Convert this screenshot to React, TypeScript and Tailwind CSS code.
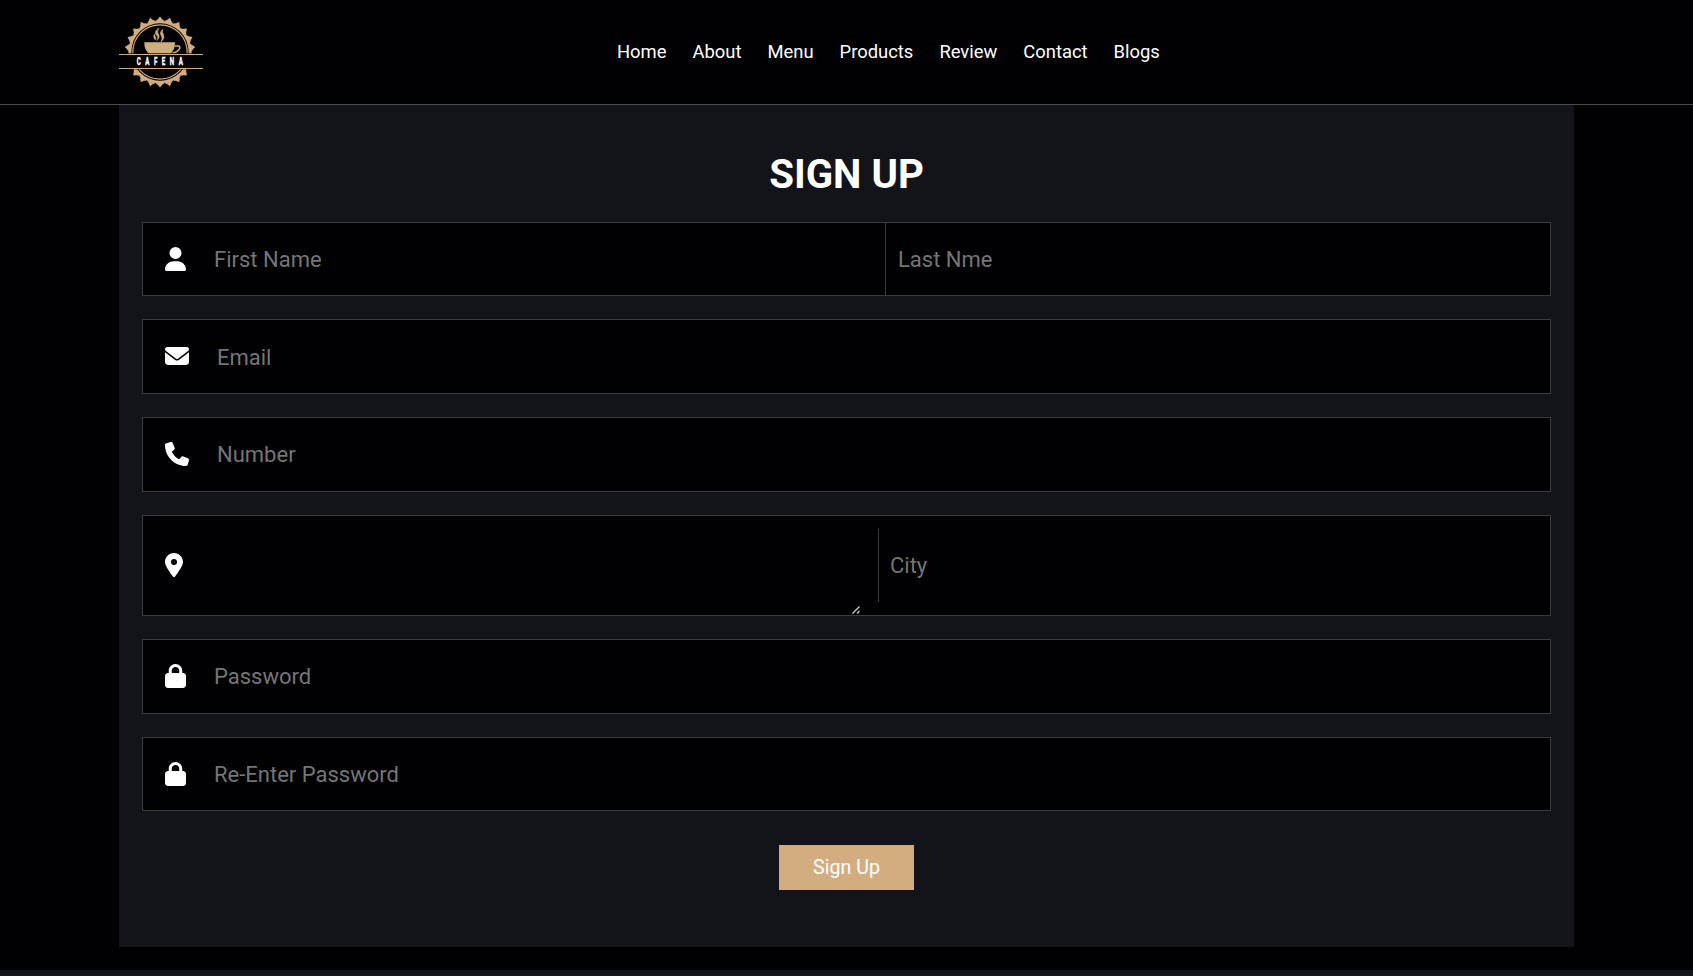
import type { ReactNode } from "react";
import {
  FaEnvelope,
  FaLocationDot,
  FaLock,
  FaPhone,
  FaUser,
} from "react-icons/fa6";

const links = ["Home", "About", "Menu", "Products", "Review", "Contact", "Blogs"];

const TEETH = 22;

function badgePath(cx: number, cy: number, inner: number, outer: number) {
  const step = (Math.PI * 2) / TEETH;
  let d = "";
  for (let i = 0; i < TEETH; i++) {
    const tip = -Math.PI / 2 + i * step;
    const at = (r: number, a: number) =>
      `${(cx + r * Math.cos(a)).toFixed(1)} ${(cy + r * Math.sin(a)).toFixed(1)}`;
    d += `${i === 0 ? "M" : "L"}${at(inner, tip - step / 2)}`;
    d += `Q${at(inner + 4, tip - step * 0.2)} ${at(outer, tip)}`;
    d += `Q${at(inner + 4, tip + step * 0.2)} ${at(inner, tip + step / 2)}`;
  }
  return d + "Z";
}

function Logo() {
  return (
    <svg viewBox="27 15 252 234" className="h-[78px] w-[84px] shrink-0">
      <path d={badgePath(150, 132, 93, 106)} fill="#d3ad7f" stroke="#d3ad7f" strokeWidth="1.5" />
      <circle cx="150" cy="132" r="86" fill="#010103" />
      <circle cx="150" cy="132" r="81.500" fill="none" stroke="#d3ad7f" strokeWidth="3.5" />
      <path d="M103 103h92q1 23-15 35h-62q-16-12-15-35Z" fill="#d3ad7f" />
      <path d="M194 114h10q8 0 4 9-5 10-21 12" fill="none" stroke="#d3ad7f" strokeWidth="5" />
      <g fill="#d3ad7f" stroke="#d3ad7f" strokeWidth="1.5">
        <path d="M147 60q-16 10-8 20 8 8 1 18 12-10 5-21-5-7 2-17Z" />
        <path d="M158 64q-11 10-5 18 6 8 0 20 12-10 8-21-6-8-3-17Z" />
        <path d="M137 75q-5 6-1 11 3 5 0 10-6-6-5-11 1-6 6-10Z" />
      </g>
      <rect x="27" y="136" width="252" height="48" fill="#010103" />
      <path d="M27 139.500H279M27 181.500H279" stroke="#d3ad7f" strokeWidth="3.5" />
      <text
        transform="translate(80 171.500) scale(.62 1)"
        fill="#fff"
        stroke="#fff"
        strokeWidth="1"
        className="font-['Roboto'] text-[30px] font-bold"
        textLength="224"
        lengthAdjust="spacing"
      >
        CAFENA
      </text>
    </svg>
  );
}

function Row({ icon, children, className }: { icon: ReactNode; children: ReactNode; className: string }) {
  return (
    <div className={`flex items-center border border-[#3b3b3d] bg-[#010103] pl-[22px] text-[24px] text-white ${className}`}>
      <span className="shrink-0 pb-px">{icon}</span>
      {children}
    </div>
  );
}

const field =
  "min-w-0 bg-transparent text-[22px] text-white outline-none placeholder:text-[#757575]";

export default function App() {
  return (
    <div className="flex h-[976px] flex-col overflow-hidden bg-[#010103] font-['Roboto',sans-serif] text-white">
      <header className="flex h-[105px] shrink-0 items-center border-b border-[#4d4d4f] pl-[119px]">
        <Logo />
        <nav className="ml-[414px] flex gap-[26px] text-[18.4px] leading-6">
          {links.map((l) => (
            <a key={l} href="#">
              {l}
            </a>
          ))}
        </nav>
      </header>

      <main className="mx-[119px] flex h-[842px] shrink-0 flex-col items-center bg-[#131419] px-[23px] pt-[45px]">
        <h1 className="text-[40.200px] leading-[50px] font-bold">SIGN UP</h1>
        <form className="mt-[22px] flex w-full flex-col">
          <Row icon={<FaUser className="w-[21px]" />} className="mb-[23px] h-[74px]">
            <input className={`${field} ml-[28px] h-full w-[672px] border-r border-[#3b3b3d] pt-px`} placeholder="First Name" />
            <input className={`${field} h-full flex-1 pt-px pl-[12px]`} placeholder="Last Nme" />
          </Row>
          <Row icon={<FaEnvelope className="w-[24px]" />} className="mb-[23px] h-[75px]">
            <input className={`${field} ml-[28px] h-full flex-1 pt-px`} placeholder="Email" />
          </Row>
          <Row icon={<FaPhone className="w-[24px]" />} className="mb-[23px] h-[75px]">
            <input className={`${field} ml-[28px] h-full flex-1`} placeholder="Number" />
          </Row>
          <Row icon={<FaLocationDot className="w-[18px]" />} className="mb-[23px] h-[101px]">
            <div className="flex h-full w-[677px] items-end">
              <textarea className={`${field} h-full flex-1 resize-none`} />
              <svg viewBox="0 0 8 8" className="mb-px h-[8px] w-[8px]" fill="none" stroke="#c8c8c8" strokeWidth="1.4">
                <path d="M.5 7.500 7.500.5M5 7.500l2.500-2.500" />
              </svg>
            </div>
            <input className={`${field} ml-[18px] h-[73px] flex-1 border-l border-[#3b3b3d] pl-[11px]`} placeholder="City" />
          </Row>
          <Row icon={<FaLock className="w-[21px]" />} className="mb-[23px] h-[75px]">
            <input className={`${field} ml-[28px] h-full flex-1`} placeholder="Password" />
          </Row>
          <Row icon={<FaLock className="w-[21px]" />} className="h-[74px]">
            <input className={`${field} ml-[28px] h-full flex-1 pt-px`} placeholder="Re-Enter Password" />
          </Row>
          <button type="button" className="mt-[34px] h-[45px] w-[135px] self-center bg-[#d3ad7f] pt-px text-[19.600px]">
            Sign Up
          </button>
        </form>
      </main>
      <footer className="mt-[23px] h-[6px] bg-[#131419]" />
    </div>
  );
}
